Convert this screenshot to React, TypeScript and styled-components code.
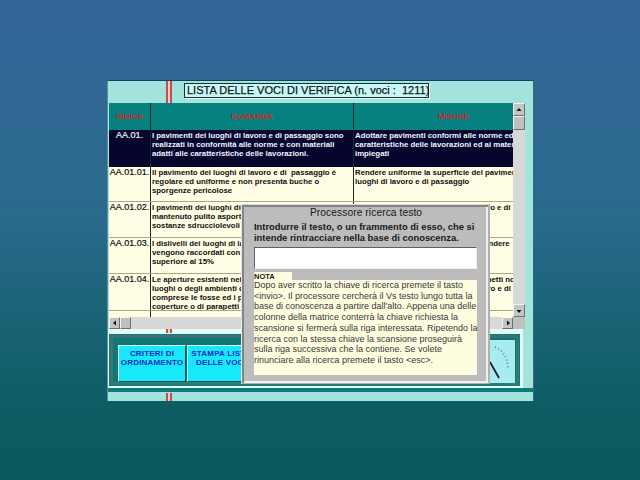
import React from "react";
import styled, { createGlobalStyle } from "styled-components";

const Global = createGlobalStyle`
  html, body, #root {
    margin: 0;
    width: 640px;
    height: 480px;
    overflow: hidden;
  }
  body {
    font-family: "Liberation Sans", Arial, sans-serif;
  }
`;

const Desktop = styled.div`
  position: relative;
  width: 640px;
  height: 480px;
  padding: 80px 0 0 107px;
  box-sizing: border-box;
  background: linear-gradient(180deg, #336699 0%, #2a6a8c 45%, #0b5d63 85%, #085a5c 100%);
`;

const Window = styled.div`
  position: relative;
  width: 427px;
  height: 321px;
  box-sizing: border-box;
  display: flex;
  flex-direction: column;
  background-color: #a2e2d8;
  background-image: conic-gradient(#98ded6 25%, #aeeae2 0 50%, #98ded6 0 75%, #aeeae2 0);
  background-size: 2px 2px;
  border-top: 1px solid #14405c;
  border-left: 1px solid #5c9094;
  border-right: 1px solid #2c6a80;
`;

const Stripe = styled.div<{ $top: number; $height: number }>`
  position: absolute;
  left: 58px;
  width: 6px;
  top: ${({ $top }) => $top}px;
  height: ${({ $height }) => $height}px;
  background: linear-gradient(90deg, #c44c4c 0 2px, #ead2c8 2px 4px, #c44c4c 4px);
`;

const TitleBand = styled.div`
  flex: none;
  height: 22px;
  box-sizing: border-box;
  padding: 2px 0 0 76px;
`;

const TitleBox = styled.div`
  height: 15px;
  width: 245px;
  padding-left: 2px;
  box-sizing: border-box;
  line-height: 13px;
  font-size: 11px;
  white-space: pre;
  -webkit-text-stroke: 0.25px #101818;
  color: #101818;
  background: #c8f8f8;
  border: 1px solid #103030;
  box-shadow: 1px 1px 0 #e8ffff;
`;

const GridArea = styled.div`
  flex: none;
  display: flex;
  height: 226px;
  width: 417px;
  margin-left: 1px;
`;

const TableColumn = styled.div`
  width: 404px;
  display: flex;
  flex-direction: column;
`;

const Rows = styled.div`
  height: 214px;
  overflow: hidden;
  background: #fffde4;
`;

const Row = styled.div<{ $height: number; $tone?: "head" | "sel" | "rest" }>`
  display: grid;
  grid-template-columns: 42px 203px 159px;
  height: ${({ $height }) => $height}px;
  overflow: hidden;
  box-sizing: border-box;
  background: ${({ $tone }) =>
    $tone === "head" ? "#078080" : $tone === "sel" ? "#05052e" : "#fffde4"};
  color: ${({ $tone }) => ($tone === "sel" ? "#f4f4ff" : "#101010")};
  border-bottom: ${({ $tone }) => ($tone ? "0" : "1px solid #a8a888")};
`;

const Cell = styled.div<{ $last?: boolean }>`
  box-sizing: border-box;
  padding: 1px 0 0 1px;
  font-size: 7.8px;
  font-weight: bold;
  line-height: 9px;
  white-space: pre;
  overflow: hidden;
  border-right: ${({ $last }) => ($last ? "0" : "1px solid #102828")};
`;

const CodeCell = styled(Cell)`
  padding: 1px 0 0 0;
  font-size: 9px;
  font-weight: normal;
  text-align: center;
  -webkit-text-stroke: 0.2px currentColor;
`;

const HeadCell = styled(Cell)`
  padding: ${({ $last }) => ($last ? "0 0 0 40px" : "0")};
  display: flex;
  align-items: center;
  justify-content: center;
  font-size: 8px;
  color: #cc2a2a;
`;

const VBar = styled.div`
  width: 12px;
  height: 214px;
  display: flex;
  flex-direction: column;
  background: #d8d8d8;
`;

const VThumb = styled.div`
  height: 14px;
  box-sizing: border-box;
  margin-bottom: auto;
  background: #c0c0c0;
  border: 1px solid;
  border-color: #f4f4f4 #707070 #707070 #f4f4f4;
`;

const ScrollBtn = styled.div`
  flex: none;
  width: 12px;
  height: 13px;
  box-sizing: border-box;
  display: flex;
  align-items: center;
  justify-content: center;
  background: #c4c4c4;
  border: 1px solid;
  border-color: #f4f4f4 #707070 #707070 #f4f4f4;
`;

const HScrollBtn = styled(ScrollBtn)`
  width: 11px;
  height: 12px;
`;

const HBar = styled.div`
  height: 12px;
  display: flex;
  background: #d8d8d8;
`;

const HThumb = styled(VThumb)`
  width: 11px;
  height: 12px;
  margin-bottom: 0;
  margin-right: auto;
`;

const Corner = styled.div`
  width: 12px;
  height: 12px;
  background: #c0c0c0;
`;

const Arrow = styled.svg`
  width: 6px;
  height: 6px;
  display: block;
`;

const BottomSection = styled.div`
  flex: none;
  height: 63px;
  display: flex;
  flex-direction: column;
`;

const FrameWrap = styled.div`
  width: 415px;
  height: 59px;
  box-sizing: border-box;
  padding: 5px 3px 2px 1px;
  background: #e4fcf8;
`;

const Frame = styled.div`
  height: 52px;
  box-sizing: border-box;
  padding: 7px 1px 0 5px;
  display: flex;
  background: #0f7676;
  border: 4px solid;
  border-color: #3a7474 #2c7c7c #2c7c7c #3a7474;
  outline: 1px solid #137a7a;
  outline-offset: -1px;
`;

const TealBand = styled.div`
  height: 4px;
  background: #0f7a7a;
`;

const ActionButton = styled.div`
  width: 68px;
  height: 37px;
  margin-right: 1px;
  box-sizing: border-box;
  padding-top: 3px;
  text-align: center;
  font-size: 8px;
  font-weight: bold;
  line-height: 9px;
  letter-spacing: 0.2px;
  white-space: pre;
  color: #1030c0;
  background: #18e8fc;
  border: 1px solid;
  border-color: #e0ffff #0a4e4e #0a4e4e #e0ffff;
`;

const Gauge = styled.svg`
  margin: -5px 0 0 auto;
  width: 30px;
  height: 43px;
  background: #a8ecf0;
`;

const Dialog = styled.div`
  position: absolute;
  left: 241px;
  top: 204px;
  width: 249px;
  height: 180px;
  box-sizing: border-box;
  padding: 2px 10px 0 12px;
  display: flex;
  flex-direction: column;
  background: #bcbcbc;
  border-top: 1px solid #d8d8d8;
  border-left: 1px solid #e8e8e8;
  border-right: 2px solid #b0b0b0;
  border-bottom: 1px solid #b0b0b0;
  box-shadow: inset 2px 2px 0 #848484, inset -2px -2px 0 #f0f0f0;
  color: #181818;
`;

const DialogTitle = styled.div`
  font-size: 10.2px;
  line-height: 12px;
  text-align: center;
  letter-spacing: 0.1px;
`;

const Prompt = styled.div`
  margin-top: 2px;
  font-size: 9.4px;
  font-weight: bold;
  line-height: 11px;
  white-space: pre;
`;

const SearchField = styled.div`
  flex: none;
  margin-top: 4px;
  width: 223px;
  height: 22px;
  box-sizing: border-box;
  background: #ffffff;
  border: 1px solid;
  border-color: #606060 #f0f0f0 #f0f0f0 #606060;
`;

const NoteTab = styled.div`
  flex: none;
  margin-top: 3px;
  width: 38px;
  height: 8px;
  background: #fffde0;
  font-size: 7.5px;
  font-weight: bold;
  line-height: 9px;
  color: #202020;
`;

const NoteBody = styled.div`
  flex: none;
  width: 223px;
  height: 95px;
  background: #fffde0;
  font-size: 9px;
  line-height: 10.7px;
  white-space: pre;
  color: #383838;
`;

const rows = [
  {
    h: 37,
    tone: "sel" as const,
    code: "AA.01.",
    q: "I pavimenti dei luoghi di lavoro e di passaggio sono\nrealizzati in conformità alle norme e con materiali\nadatti alle caratteristiche delle lavorazioni.",
    m: "Adottare pavimenti conformi alle norme ed\ncaratteristiche delle lavorazioni ed ai materiali\nimpiegati",
  },
  {
    h: 35,
    code: "AA.01.01.",
    q: "Il pavimento dei luoghi di lavoro e di  passaggio è\nregolare ed uniforme e non presenta buche o\nsporgenze pericolose",
    m: "Rendere uniforme la superficie del pavimento\nluoghi di lavoro e di passaggio",
  },
  {
    h: 36,
    code: "AA.01.02.",
    q: "I pavimenti dei luoghi di lavoro\nmantenuto pulito asportando\nsostanze sdrucciolevoli",
    m: "Mantenere il pavimento pulito e libero e di",
  },
  {
    h: 36,
    code: "AA.01.03.",
    q: "I dislivelli dei luoghi di lavoro\nvengono raccordati con\nsuperiore al 15%",
    m: "Raccordare i dislivelli con rampe, rendere",
  },
  {
    h: 37,
    code: "AA.01.04.",
    q: "Le aperture esistenti nei\nluoghi o degli ambienti di\ncomprese le fosse ed i pozzi\ncoperture o di parapetti",
    m: "Dotare le aperture di coperte o parapetti normali\nProteggere con cura i luoghi di lavoro e di passaggio",
  },
];

const note = `Dopo aver scritto la chiave di ricerca premete il tasto
<invio>. Il processore cercherà il Vs testo lungo tutta la
base di conoscenza a partire dall'alto. Appena una delle
colonne della matrice conterrà la chiave richiesta la
scansione si fermerà sulla riga interessata. Ripetendo la
ricerca con la stessa chiave la scansione proseguirà
sulla riga successiva che la contiene. Se volete
rinunciare alla ricerca premete il tasto <esc>.`;

const ArrowIcon = ({ d }: { d: string }) => (
  <Arrow viewBox="0 0 6 6">
    <path d={d} fill="#101010" />
  </Arrow>
);

export default function App() {
  return (
    <>
      <Global />
      <Desktop>
        <Window>
          <Stripe $top={0} $height={22} />
          <Stripe $top={248} $height={4} />
          <Stripe $top={312} $height={8} />
          <TitleBand>
            <TitleBox>LISTA DELLE VOCI DI VERIFICA (n. voci :  1211)</TitleBox>
          </TitleBand>
          <GridArea>
            <TableColumn>
              <Rows>
                <Row $height={27} $tone="head">
                  <HeadCell>INDICE</HeadCell>
                  <HeadCell>DOMANDA</HeadCell>
                  <HeadCell $last>MISURE</HeadCell>
                </Row>
                {rows.map((r) => (
                  <Row key={r.code} $height={r.h} $tone={r.tone}>
                    <CodeCell>{r.code}</CodeCell>
                    <Cell>{r.q}</Cell>
                    <Cell $last>{r.m}</Cell>
                  </Row>
                ))}
                <Row $height={6} $tone="rest">
                  <Cell />
                  <Cell $last />
                </Row>
              </Rows>
              <HBar>
                <HScrollBtn>
                  <ArrowIcon d="M4 0.5 L4 5.5 L1 3 Z" />
                </HScrollBtn>
                <HThumb />
                <HScrollBtn>
                  <ArrowIcon d="M2 0.5 L2 5.5 L5 3 Z" />
                </HScrollBtn>
              </HBar>
            </TableColumn>
            <div>
              <VBar>
                <ScrollBtn>
                  <ArrowIcon d="M0.5 4 L5.5 4 L3 1 Z" />
                </ScrollBtn>
                <VThumb />
                <ScrollBtn>
                  <ArrowIcon d="M0.5 2 L5.5 2 L3 5 Z" />
                </ScrollBtn>
              </VBar>
              <Corner />
            </div>
          </GridArea>
          <BottomSection>
            <FrameWrap>
              <Frame>
                <ActionButton>{"CRITERI DI\nORDINAMENTO"}</ActionButton>
                <ActionButton>{"STAMPA LISTA\nDELLE VOCI"}</ActionButton>
                <Gauge viewBox="0 0 30 43">
                  <path d="M5 22 L14 38" stroke="#101820" strokeWidth="1.6" />
                  <path
                    d="M10 7 Q22 12 23 28"
                    fill="none"
                    stroke="#5a8a90"
                    strokeWidth="2"
                    strokeDasharray="1 2.5"
                  />
                </Gauge>
              </Frame>
            </FrameWrap>
            <TealBand />
          </BottomSection>
        </Window>
        <Dialog>
          <DialogTitle>Processore ricerca testo</DialogTitle>
          <Prompt>
            {"Introdurre il testo, o un frammento di esso, che si\nintende rintracciare nella base di conoscenza."}
          </Prompt>
          <SearchField />
          <NoteTab>NOTA</NoteTab>
          <NoteBody>{note}</NoteBody>
        </Dialog>
      </Desktop>
    </>
  );
}
